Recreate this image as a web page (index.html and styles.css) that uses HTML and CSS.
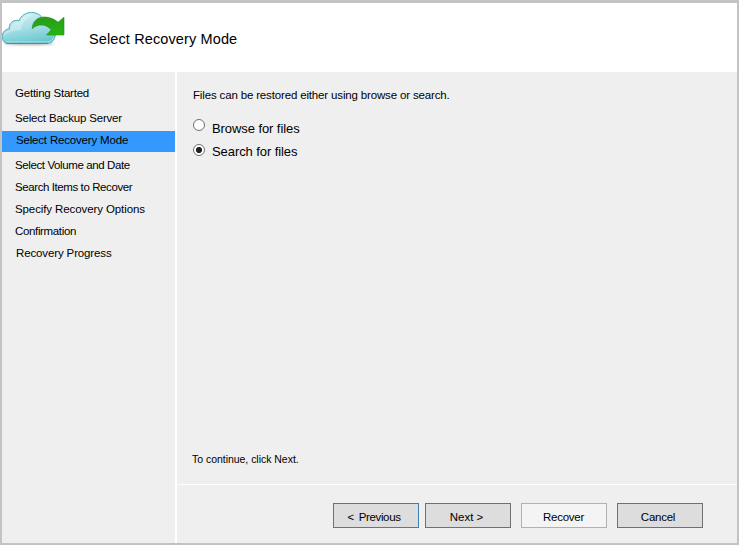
FILE: index.html
```html
<!DOCTYPE html>
<html lang="en">
<head>
<meta charset="utf-8">
<title>Select Recovery Mode</title>
<link rel="stylesheet" href="styles.css">
</head>
<body>
<div class="wizard">
  <header class="header">
    <svg class="logo" width="68" height="52" viewBox="0 0 68 52" aria-hidden="true">
      <defs>
        <linearGradient id="cloud" x1="0.2" y1="0" x2="0.5" y2="1">
          <stop offset="0" stop-color="#d5f3f6"/>
          <stop offset="0.5" stop-color="#a9dfe6"/>
          <stop offset="1" stop-color="#6cc8d0"/>
        </linearGradient>
        <linearGradient id="arrow" x1="0" y1="0" x2="0" y2="1">
          <stop offset="0" stop-color="#2a9a1c"/>
          <stop offset="1" stop-color="#25b80f"/>
        </linearGradient>
        <filter id="soft" x="-10%" y="-100%" width="120%" height="300%"><feGaussianBlur stdDeviation="1"/></filter>
      </defs>
      <ellipse cx="29" cy="43.500" rx="25" ry="1.800" fill="#8a8a8a" opacity=".6" filter="url(#soft)"/>
      <path d="M2.300 35.500C2.800 31.500 5.500 29.300 9.300 28.800C8.600 23.500 13 19.300 19.200 20.500C21 15.500 26 12.500 31.500 12.500C38 12.500 43 16.500 44.300 22.200C51 23 55.500 28 55.300 34.500C55 39.500 52 43.200 47.500 43.200H7C4 43 1.600 39.500 2.300 35.500Z" fill="url(#cloud)" stroke="#45aebb" stroke-width="1"/>
      <path d="M3.500 36C4 32 7 30.500 10.500 30.300C9.500 25 14 21 20 22.300C22 16.500 27 14 34 14.500C27 17 22 22 21 30C14 30 8 32 3.500 36Z" fill="#fff" opacity=".3"/>
      <path d="M6 42H47.500C50.500 42 53 39.500 54 37" fill="none" stroke="#c0edf0" stroke-width=".8"/>
      <path d="M6 43.400H48" fill="none" stroke="#258f9c" stroke-width=".8"/>
      <path d="M32.200 28.700C32.500 20.800 38 17 44.500 17C50 17 55 19.500 58 22.200L64 17.300V35H46.500L51.300 29.800C46 23.800 38 23.200 32.200 28.700Z" fill="url(#arrow)" stroke="#1e8d16" stroke-width=".6"/>
    </svg>
    <h1 class="title">Select Recovery Mode</h1>
  </header>
  <div class="body">
    <nav class="steps">
      <div class="step first">Getting Started</div>
      <div class="step backup">Select Backup Server</div>
      <div class="step active">Select Recovery Mode</div>
      <div class="step volume">Select Volume and Date</div>
      <div class="step search">Search Items to Recover</div>
      <div class="step specify">Specify Recovery Options</div>
      <div class="step confirm">Confirmation</div>
      <div class="step progress">Recovery Progress</div>
    </nav>
    <main class="main">
      <section class="content">
        <p class="intro">Files can be restored either using browse or search.</p>
        <label class="option"><span class="radio"></span>Browse for files</label>
        <label class="option chosen"><span class="radio"></span>Search for files</label>
        <p class="hint">To continue, click Next.</p>
      </section>
      <footer class="footer">
        <button class="btn previous"><span>&lt;</span> <span class="word">Previous</span></button>
        <button class="btn next">Next &gt;</button>
        <button class="btn recover">Recover</button>
        <button class="btn cancel">Cancel</button>
      </footer>
    </main>
  </div>
</div>
</body>
</html>
```
FILE: styles.css
```css
* { box-sizing: border-box; }
body {
  margin: 0;
  font-family: "Liberation Sans", Arial, sans-serif;
  color: #000;
}
.wizard {
  width: 739px;
  height: 545px;
  display: flex;
  flex-direction: column;
  border: 2px solid #c3c3c3;
  border-top-width: 3px;
  background: #efefef;
}
.header {
  height: 69px;
  flex: none;
  display: flex;
  background: #fff;
}
.logo {
  flex: none;
  margin: -3px 0 0 -2px;
  clip-path: inset(3px 0 0 2px);
}
.title {
  margin: 27px 0 0 21px;
  font-size: 14.5px;
  line-height: 18px;
  font-weight: 400;
  letter-spacing: .12px;
}
.body { flex: 1; display: flex; min-height: 0; }
.steps {
  width: 175px;
  flex: none;
  padding-top: 10px;
  border-right: 2px solid #fff;
}
.step {
  height: 22px;
  padding-left: 13px;
  font-size: 11.5px;
  line-height: 22px;
  white-space: nowrap;
}
.first { letter-spacing: -.22px; margin-bottom: 3px; }
.backup { letter-spacing: -.18px; }
.active {
  height: 21px;
  margin: 2px 0;
  padding-left: 14px;
  line-height: 18px;
  background: #3399ff;
  letter-spacing: -.18px;
}
.volume { letter-spacing: -.39px; }
.search { letter-spacing: -.41px; }
.specify { letter-spacing: -.1px; }
.confirm { letter-spacing: -.35px; }
.progress { letter-spacing: -.13px; padding-left: 14px; }
.main { flex: 1; display: flex; flex-direction: column; }
.content {
  flex: 1;
  display: flex;
  flex-direction: column;
  padding: 15px 0 17px 16px;
}
.intro {
  margin: 0 0 16px;
  font-size: 11.5px;
  line-height: 16px;
  letter-spacing: -.155px;
}
.option {
  display: flex;
  height: 23px;
  font-size: 13px;
  line-height: 19px;
  letter-spacing: -.08px;
}
.radio {
  width: 12px;
  height: 12px;
  margin-right: 7px;
  border: 1px solid #707070;
  border-radius: 50%;
  background: #fff;
}
.chosen .radio {
  margin-top: 2px;
  background: radial-gradient(circle, #222 2.7px, #fff 3.5px);
}
.hint {
  margin: auto 0 0 -1px;
  font-size: 10.5px;
  line-height: 16px;
  letter-spacing: -.03px;
}
.footer {
  height: 59px;
  display: flex;
  padding: 18px 0 0 156px;
  border-top: 1px solid #fff;
}
.btn {
  width: 86px;
  height: 25px;
  margin-right: 6px;
  padding: 2px 0 0;
  border: 1px solid #707070;
  background: #ddd;
  color: #000;
  font: 11.5px/20px "Liberation Sans", Arial, sans-serif;
  letter-spacing: -.25px;
}
.previous { border-color: #3c7fb1; padding-right: 4px; letter-spacing: -.35px; }
.previous .word { margin-left: 2px; }
.next { margin-right: 10px; padding-right: 3px; letter-spacing: 0; }
.recover { margin-right: 10px; border-color: #adb2b5; background: #f4f4f4; padding-right: 1px; }
.cancel { margin-right: 0; padding-right: 4px; }
```
